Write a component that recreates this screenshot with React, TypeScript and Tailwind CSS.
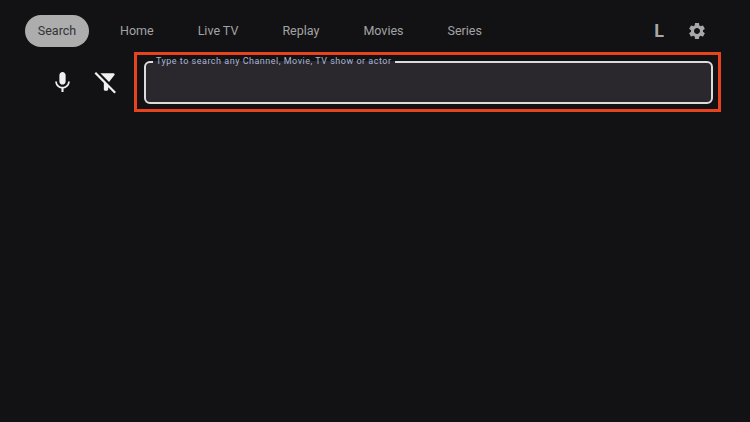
import { MdMic, MdFilterAltOff, MdSettings } from "react-icons/md";

const tabs = [
  { label: "Home", className: "ml-[31px]" },
  { label: "Live TV", className: "ml-[44px]" },
  { label: "Replay", className: "ml-[44px]" },
  { label: "Movies", className: "ml-[44px]" },
  { label: "Series", className: "ml-[44px]" },
];

export default function App() {
  return (
    <div className="w-[750px] h-[422px] overflow-hidden bg-[#121214] pt-[15px] font-['Roboto',sans-serif]">
      {/* top nav */}
      <div className="flex items-center h-[32px] pl-[25px] pr-[43px]">
        <div className="flex items-center justify-center w-[64px] h-[32px] rounded-full bg-[#adadad] text-[#333336] text-[12.5px]">
          Search
        </div>
        {tabs.map((t) => (
          <div key={t.label} className={`${t.className} text-[12.5px] text-[#a3a3a5] leading-none`}>
            {t.label}
          </div>
        ))}
        <div className="ml-auto text-[18px] font-bold text-[#a8a8aa] leading-none">L</div>
        <MdSettings className="ml-[23px] text-[#a8a8aa]" size={20} />
      </div>

      {/* search row */}
      <div className="flex items-center mt-[5px]">
        <MdMic className="ml-[50px] text-[#f0f0f0]" size={25} />
        <MdFilterAltOff className="ml-[18px] text-[#f0f0f0]" size={26} />
        <div className="ml-[15px] w-[587px] h-[60px] border-[3px] border-[#e8431f] pl-[7px] pt-[2px]">
          <fieldset className="w-[569px] h-[47px] rounded-[6px] border-2 border-[#dcdcdc] bg-[#2a282d] pl-[7px] m-0">
            <legend className="px-[3px] text-[9px] leading-[9px] tracking-[0.5px] text-[#aab6d6]">
              Type to search any Channel, Movie, TV show or actor
            </legend>
          </fieldset>
        </div>
      </div>
    </div>
  );
}
